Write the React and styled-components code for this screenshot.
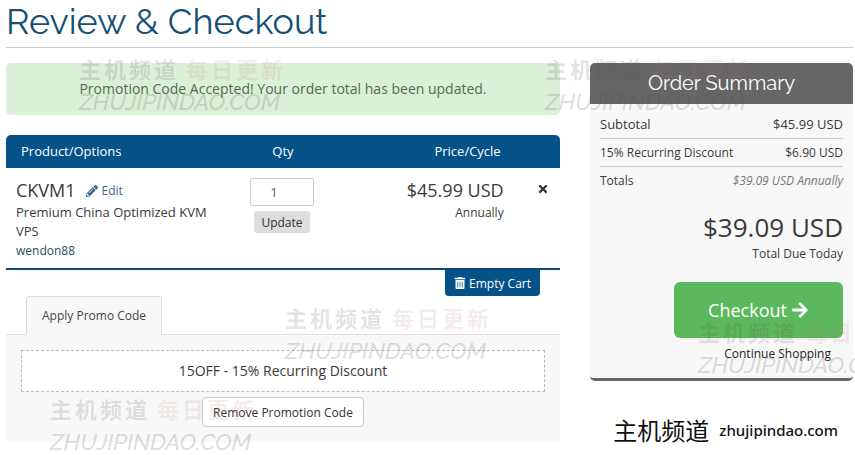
import React from "react";
import styled, { createGlobalStyle } from "styled-components";
import {
  FaArrowRight,
  FaPencilAlt,
  FaTimes,
  FaTrashAlt,
} from "react-icons/fa";

const GlobalStyle = createGlobalStyle`
  * {
    box-sizing: border-box;
  }

  body {
    margin: 0;
    background: #fff;
    color: #3a3a3a;
    font-family: "Open Sans", "Noto Sans CJK SC", sans-serif;
    font-size: 13px;
    line-height: 19px;
  }

  button,
  input {
    font-family: inherit;
  }

  a {
    text-decoration: none;
  }
`;

const Page = styled.div`
  position: relative;
  overflow: hidden;
  padding: 0 2px 12px 6px;
`;

const PageTitle = styled.h1`
  margin: 0 0 15px;
  padding-bottom: 5px;
  border-bottom: 1px solid #ccc;
  color: #145078;
  font-family: Raleway, Lato, sans-serif;
  font-size: 36px;
  font-weight: 400;
  line-height: 42px;
`;

const Columns = styled.div`
  display: grid;
  grid-template-columns: minmax(0, 554fr) minmax(0, 263fr);
  gap: 30px;
  align-items: start;
`;

const Alert = styled.div`
  margin-bottom: 20px;
  padding: 16px;
  border-radius: 5px;
  background: #dcefd8;
  color: #4a7049;
  font-size: 14px;
  line-height: 20px;
  text-align: center;
`;

const CartTable = styled.table`
  width: 100%;
  border-collapse: separate;
  border-spacing: 0;
  border-bottom: 2px solid #0a4a78;
  table-layout: fixed;
`;

const HeadCell = styled.th`
  width: ${({ $width }) => $width};
  padding: 7px 15px;
  background: #055289;
  color: #fff;
  font-size: 13px;
  font-weight: 400;
  text-align: ${({ $align }) => $align || "left"};

  &:first-child {
    border-top-left-radius: 5px;
  }

  &:last-child {
    border-top-right-radius: 5px;
  }
`;

const Cell = styled.td`
  height: 100px;
  padding: 10px 12px 8px 10px;
  text-align: ${({ $align }) => $align || "left"};
  vertical-align: top;
`;

const RemoveCell = styled(Cell)`
  padding-right: 6px;
`;

const ItemTitle = styled.div`
  display: flex;
  align-items: center;
  gap: 10px;
  font-size: 18px;
  line-height: 25px;
`;

const EditLink = styled.a`
  display: inline-flex;
  align-items: center;
  gap: 4px;
  color: #3d6594;
  font-size: 12px;
`;

const ItemDomain = styled.div`
  color: #1f4f66;
  font-size: 12px;
`;

const ItemPrice = styled.div`
  font-size: 18px;
  line-height: 25px;
`;

const ItemCycle = styled.div`
  font-size: 12px;
`;

const QtyForm = styled.form`
  display: flex;
  flex-direction: column;
  align-items: center;
  gap: 5px;
`;

const QtyInput = styled.input`
  width: 64px;
  height: 28px;
  padding: 0 16px 0 0;
  border: 1px solid #ccc;
  border-radius: 2px;
  color: #555;
  font-size: 13px;
  text-align: center;
`;

const UpdateButton = styled.button`
  height: 22px;
  padding: 0 7px;
  border: 0;
  border-radius: 3px;
  background: #ddd;
  color: #333;
  font-size: 12px;
`;

const RemoveButton = styled.button`
  display: inline-flex;
  padding: 5px;
  border: 0;
  background: none;
  color: #333;
  font-size: 12px;
`;

const EmptyCartRow = styled.div`
  display: flex;
  justify-content: flex-end;
  padding-right: 20px;
`;

const EmptyCartButton = styled.button`
  display: flex;
  align-items: center;
  gap: 3px;
  height: 26px;
  padding: 0 9px;
  border: 0;
  border-radius: 0 0 4px 4px;
  background: #055289;
  color: #fff;
  font-size: 12px;
  font-weight: 500;
`;

const TabBar = styled.div`
  display: flex;
  padding-left: 20px;
  border-bottom: 1px solid #ddd;
`;

const Tab = styled.button`
  height: 39px;
  margin-bottom: -1px;
  padding: 0 15px;
  border: 1px solid #ddd;
  border-bottom-color: #f8f8f8;
  border-radius: 4px 4px 0 0;
  background: #f8f8f8;
  color: #444;
  font-size: 12px;
`;

const TabPanel = styled.div`
  display: flex;
  flex-direction: column;
  align-items: center;
  gap: 5px;
  padding: 15px;
  background: #f8f8f8;
`;

const PromoCode = styled.div`
  width: 100%;
  padding: 9px;
  border: 1px dashed #bbb;
  background: #fff;
  font-size: 14px;
  line-height: 22px;
  text-align: center;
`;

const RemovePromoButton = styled.button`
  height: 30px;
  padding: 0 10px;
  border: 1px solid #ccc;
  border-radius: 4px;
  background: #fff;
  color: #333;
  font-size: 12px;
`;

const Summary = styled.aside`
  border-bottom: 3px solid #666;
  border-radius: 5px;
  background: #f8f8f8;
`;

const SummaryTitle = styled.h2`
  margin: 0;
  border-radius: 5px 5px 0 0;
  background: #666;
  color: #fff;
  font-family: Raleway, Lato, sans-serif;
  font-size: 20px;
  font-weight: 400;
  line-height: 41px;
  text-align: center;
`;

const SummaryBody = styled.div`
  display: flex;
  flex-direction: column;
  align-items: flex-end;
  padding: 7px 10px 15px;
`;

const SummaryRow = styled.div`
  display: flex;
  justify-content: space-between;
  align-self: stretch;
  padding: 4px 0;
  border-bottom: 1px solid ${({ $last }) => ($last ? "transparent" : "#ccc")};
  font-size: ${({ $small }) => ($small ? "12px" : "13px")};
`;

const Recurring = styled.em`
  color: #777;
`;

const TotalAmount = styled.div`
  margin-top: 15px;
  font-size: 26px;
  line-height: 34px;
`;

const TotalLabel = styled.div`
  font-size: 12px;
`;

const CheckoutButton = styled.button`
  display: flex;
  align-items: center;
  justify-content: center;
  gap: 4px;
  width: 169px;
  height: 56px;
  margin: 19px 0 6px;
  border: 0;
  border-radius: 6px;
  background: #5cb85c;
  color: #fff;
  font-size: 18px;
`;

const ContinueLink = styled.a`
  padding-right: 12px;
  color: #222;
  font-size: 12px;
`;

const SiteLogo = styled.footer`
  display: flex;
  align-items: center;
  justify-content: flex-end;
  gap: 10px;
  padding: 36px 15px 0 0;
  color: #111;
  font-family: "Noto Sans", "Noto Sans CJK SC", sans-serif;
  font-size: 15px;
  font-weight: 500;
  line-height: 26px;
`;

const SiteName = styled.span`
  font-family: "Noto Sans CJK SC", sans-serif;
  font-size: 24px;
  font-weight: 400;
`;

const Stamp = styled.div`
  position: absolute;
  top: ${({ $top }) => $top}px;
  left: ${({ $left }) => $left}px;
  color: rgba(80, 80, 80, 0.2);
  font-family: Raleway, Lato, sans-serif;
  font-size: 23px;
  font-style: italic;
  font-weight: 500;
  line-height: 36px;
  white-space: nowrap;
  pointer-events: none;
`;

const StampName = styled.div`
  display: flex;
  gap: 10px;
  font-family: "Noto Sans CJK SC", sans-serif;
  font-size: 22px;
  font-style: normal;
  font-weight: 700;
  line-height: 32px;
`;

const StampChars = styled.span`
  display: flex;
  gap: 3px;
  color: ${({ $tint }) => $tint};
`;

const stamps = [
  { top: 52, left: 79 },
  { top: 52, left: 545 },
  { top: 301, left: 285 },
  { top: 392, left: 50 },
  { top: 315, left: 698 },
];

const summaryRows = [
  { label: "Subtotal", value: "$45.99 USD" },
  { label: "15% Recurring Discount", value: "$6.90 USD", small: true },
];

function Characters({ text, tint }) {
  return (
    <StampChars $tint={tint}>
      {[...text].map((char) => (
        <span key={char}>{char}</span>
      ))}
    </StampChars>
  );
}

function Watermark({ top, left }) {
  return (
    <Stamp $top={top} $left={left} aria-hidden="true">
      <StampName>
        <Characters text="主机频道" tint="rgba(80, 80, 80, 0.17)" />
        <Characters text="每日更新" tint="rgba(180, 110, 110, 0.14)" />
      </StampName>
      ZHUJIPINDAO.COM
    </Stamp>
  );
}

function Cart() {
  return (
    <>
      <CartTable>
        <thead>
          <tr>
            <HeadCell $width="42%">Product/Options</HeadCell>
            <HeadCell $width="16%" $align="center">
              Qty
            </HeadCell>
            <HeadCell $width="34%" $align="right">
              Price/Cycle
            </HeadCell>
            <HeadCell $width="8%" aria-label="Remove" />
          </tr>
        </thead>
        <tbody>
          <tr>
            <Cell>
              <ItemTitle>
                CKVM1
                <EditLink href="#edit">
                  <FaPencilAlt size={12} /> Edit
                </EditLink>
              </ItemTitle>
              <div>Premium China Optimized KVM VPS</div>
              <ItemDomain>wendon88</ItemDomain>
            </Cell>
            <Cell $align="center">
              <QtyForm onSubmit={(event) => event.preventDefault()}>
                <QtyInput type="text" defaultValue="1" aria-label="Quantity" />
                <UpdateButton type="submit">Update</UpdateButton>
              </QtyForm>
            </Cell>
            <Cell $align="right">
              <ItemPrice>$45.99 USD</ItemPrice>
              <ItemCycle>Annually</ItemCycle>
            </Cell>
            <RemoveCell $align="right">
              <RemoveButton type="button" aria-label="Remove item">
                <FaTimes />
              </RemoveButton>
            </RemoveCell>
          </tr>
        </tbody>
      </CartTable>
      <EmptyCartRow>
        <EmptyCartButton type="button">
          <FaTrashAlt size={12} /> Empty Cart
        </EmptyCartButton>
      </EmptyCartRow>
    </>
  );
}

function Promo() {
  return (
    <section>
      <TabBar role="tablist">
        <Tab type="button" role="tab" id="promo-tab" aria-selected="true">
          Apply Promo Code
        </Tab>
      </TabBar>
      <TabPanel role="tabpanel" aria-labelledby="promo-tab">
        <PromoCode>15OFF - 15% Recurring Discount</PromoCode>
        <RemovePromoButton type="button">
          Remove Promotion Code
        </RemovePromoButton>
      </TabPanel>
    </section>
  );
}

function OrderSummary() {
  return (
    <Summary>
      <SummaryTitle>Order Summary</SummaryTitle>
      <SummaryBody>
        {summaryRows.map(({ label, value, small }) => (
          <SummaryRow key={label} $small={small}>
            <span>{label}</span>
            <span>{value}</span>
          </SummaryRow>
        ))}
        <SummaryRow $small $last>
          <span>Totals</span>
          <Recurring>$39.09 USD Annually</Recurring>
        </SummaryRow>
        <TotalAmount>$39.09 USD</TotalAmount>
        <TotalLabel>Total Due Today</TotalLabel>
        <CheckoutButton type="button">
          Checkout <FaArrowRight />
        </CheckoutButton>
        <ContinueLink href="#shop">Continue Shopping</ContinueLink>
      </SummaryBody>
    </Summary>
  );
}

export default function App() {
  return (
    <Page>
      <GlobalStyle />
      <PageTitle>Review &amp; Checkout</PageTitle>
      <Columns>
        <main>
          <Alert role="status">
            Promotion Code Accepted! Your order total has been updated.
          </Alert>
          <Cart />
          <Promo />
        </main>
        <div>
          <OrderSummary />
          <SiteLogo>
            <SiteName>主机频道</SiteName>
            zhujipindao.com
          </SiteLogo>
        </div>
      </Columns>
      {stamps.map(({ top, left }) => (
        <Watermark key={`${top}-${left}`} top={top} left={left} />
      ))}
    </Page>
  );
}
